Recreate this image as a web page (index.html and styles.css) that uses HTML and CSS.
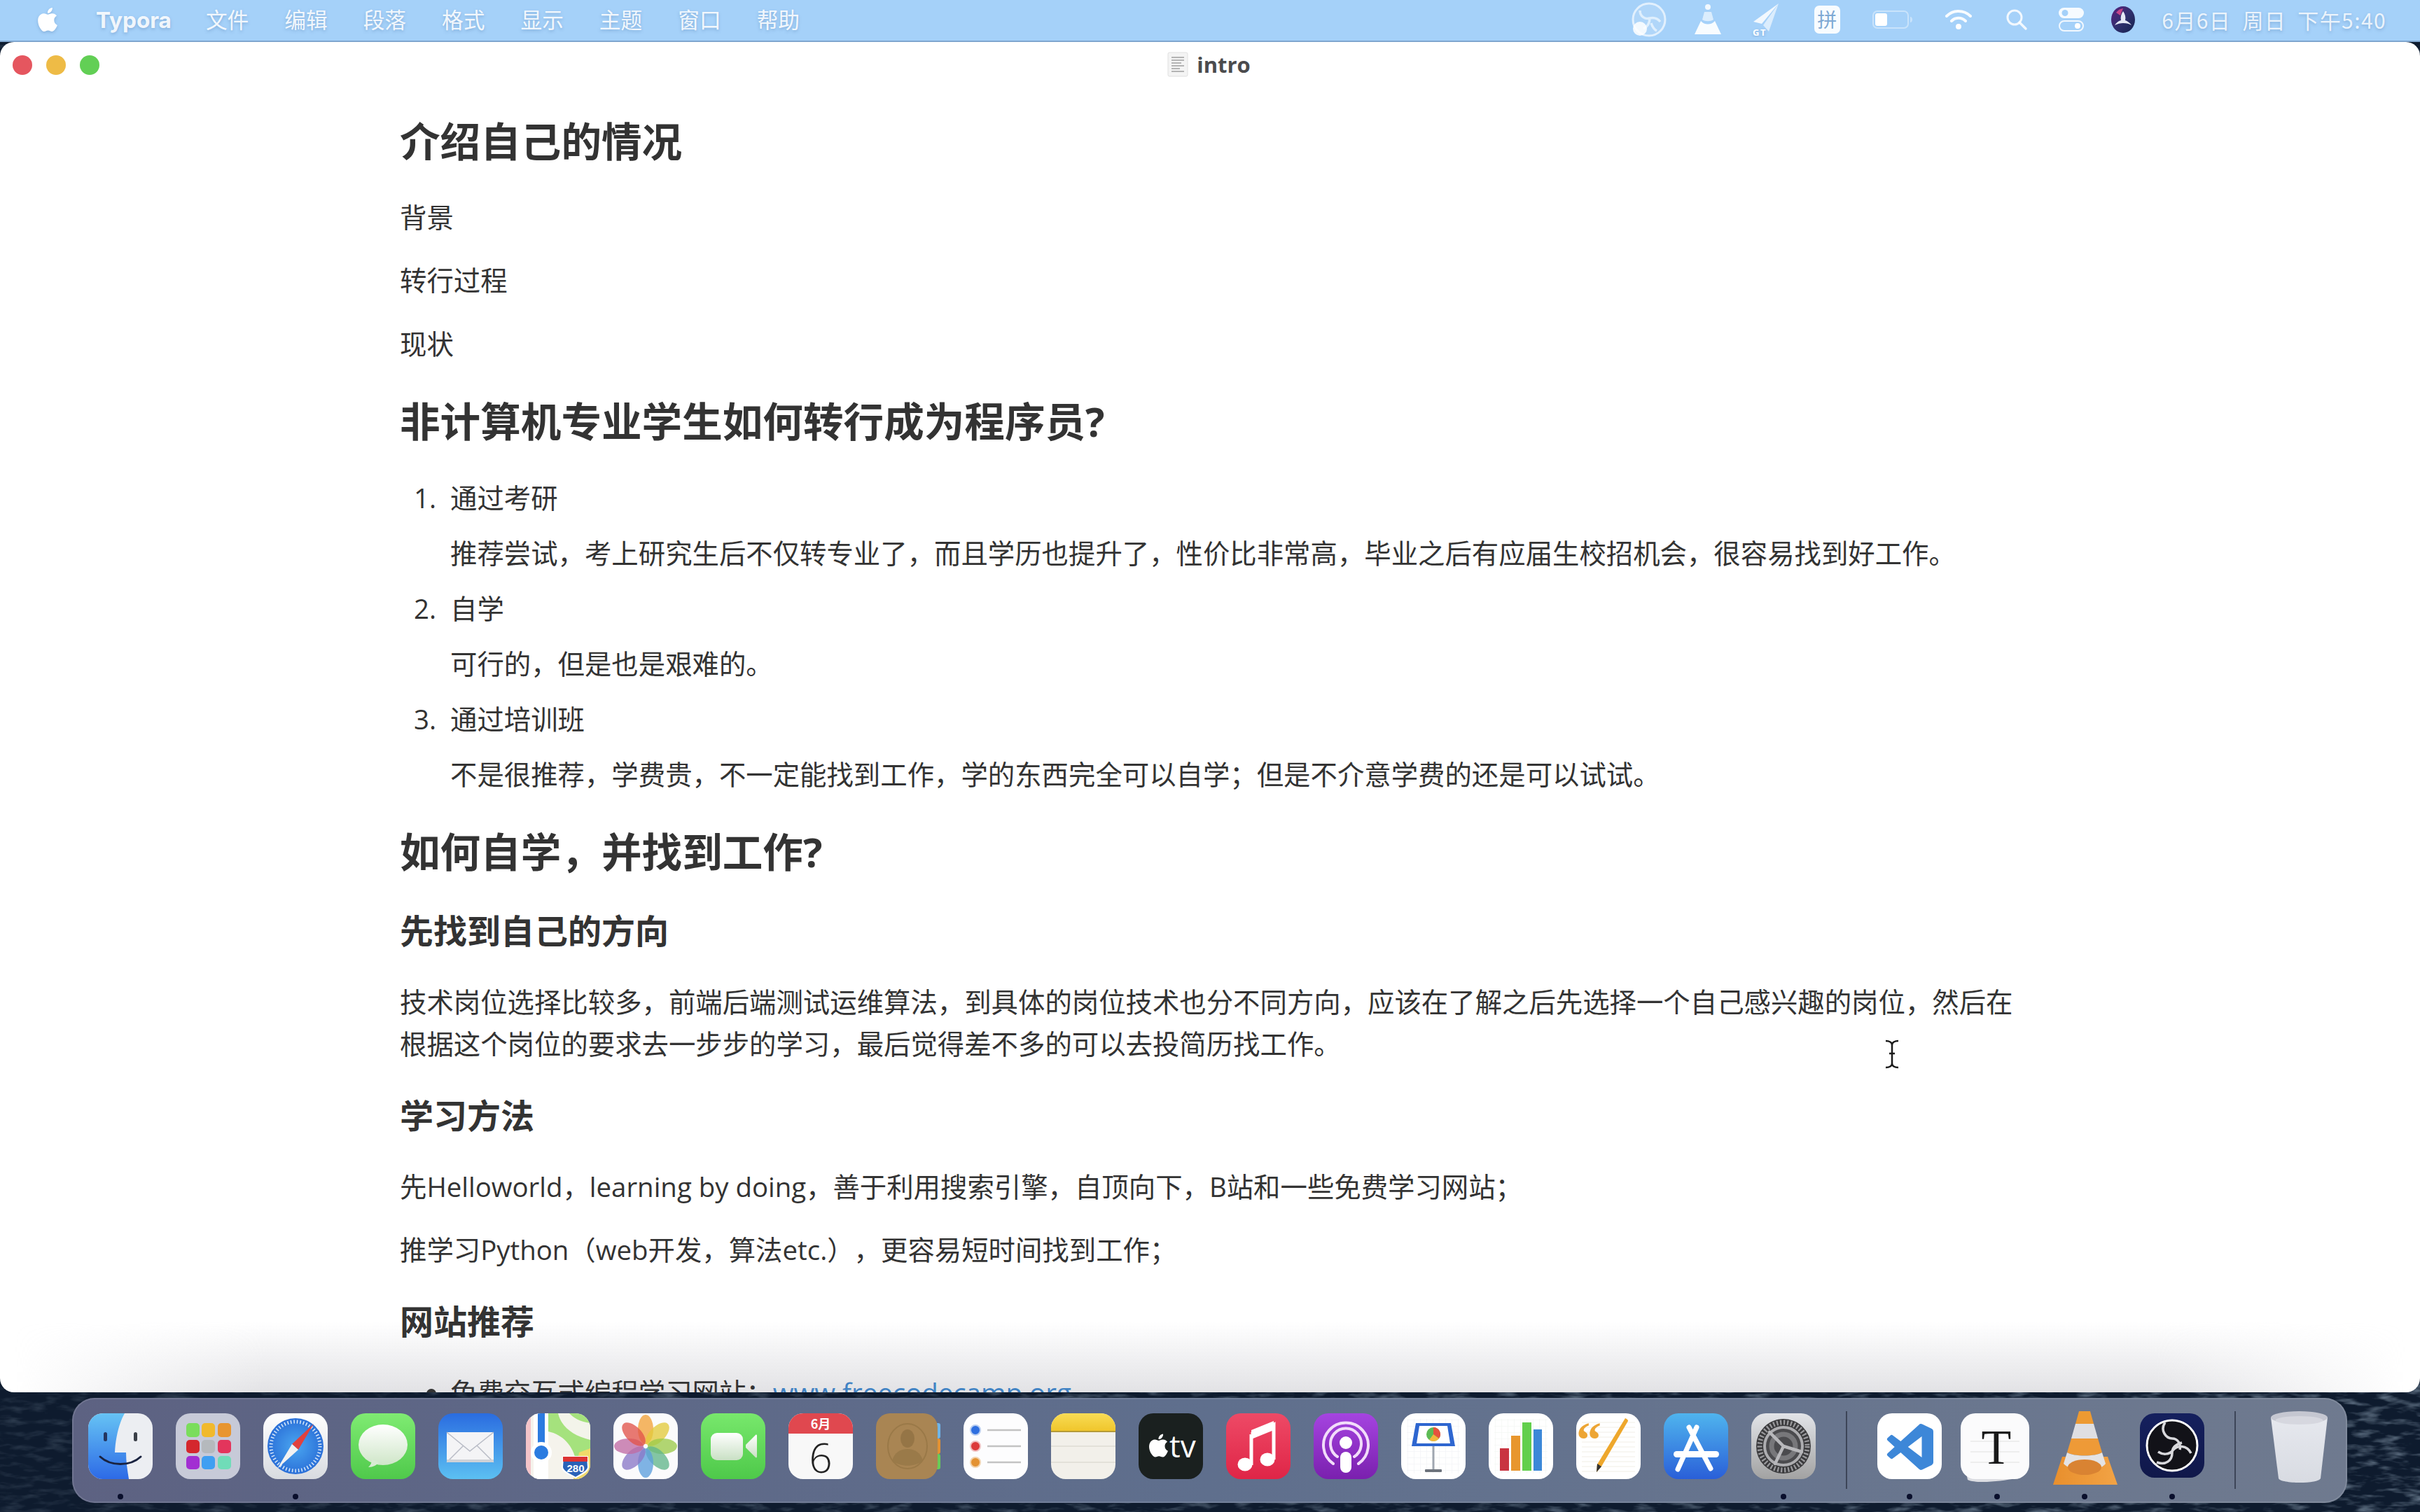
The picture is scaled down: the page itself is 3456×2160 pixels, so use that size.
FILE: index.html
```html
<!DOCTYPE html>
<html lang="zh-CN">
<head>
<meta charset="utf-8">
<title>intro - Typora</title>
<link rel="stylesheet" href="styles.css">
</head>
<body>
<svg class="wallpaper" width="3456" height="2160" aria-hidden="true">
  <defs>
    <filter id="wp" x="0" y="0" width="100%" height="100%">
      <feTurbulence type="fractalNoise" baseFrequency="0.03 0.11" numOctaves="3" seed="7"/>
      <feColorMatrix values="0 0 0 0 0.42  0 0 0 0 0.54  0 0 0 0 0.66  1.3 0 0 0 -0.62"/>
    </filter>
    <linearGradient id="wpfade" x1="0" y1="0" x2="1" y2="0">
      <stop offset="0" stop-color="#fff" stop-opacity=".35"/>
      <stop offset=".45" stop-color="#fff" stop-opacity=".75"/>
      <stop offset="1" stop-color="#fff" stop-opacity="1"/>
    </linearGradient>
    <mask id="wpmask"><rect width="3456" height="2160" fill="url(#wpfade)"/></mask>
  </defs>
  <rect width="3456" height="2160" fill="#0e1b2e"/>
  <g mask="url(#wpmask)"><rect width="3456" height="2160" filter="url(#wp)"/></g>
</svg>

<header class="menubar">
  <svg class="apple" viewBox="0 0 24 24"><path d="M12.152 6.896c-.948 0-2.415-1.078-3.96-1.04-2.04.027-3.91 1.183-4.961 3.014-2.117 3.675-.546 9.103 1.519 12.09 1.013 1.454 2.208 3.09 3.792 3.039 1.52-.065 2.09-.987 3.935-.987 1.831 0 2.35.987 3.96.948 1.637-.026 2.676-1.48 3.676-2.948 1.156-1.688 1.636-3.325 1.662-3.415-.039-.013-3.182-1.221-3.22-4.857-.026-3.04 2.48-4.494 2.597-4.559-1.429-2.09-3.623-2.324-4.39-2.376-2-.156-3.675 1.09-4.61 1.09zM15.53 3.83c.843-1.012 1.4-2.427 1.245-3.83-1.207.052-2.662.805-3.532 1.818-.78.896-1.454 2.338-1.273 3.714 1.338.104 2.715-.688 3.559-1.701"/></svg>
  <nav class="menus">
    <span class="menu-app">Typora</span>
    <span>文件</span><span>编辑</span><span>段落</span><span>格式</span><span>显示</span><span>主题</span><span>窗口</span><span>帮助</span>
  </nav>
  <div class="status">
    <svg width="54" height="50" viewBox="0 0 54 50"><circle cx="27" cy="25" r="23" fill="#fff" fill-opacity=".12" stroke="#fff" stroke-opacity=".65" stroke-width="3"/><circle cx="14" cy="38" r="10" fill="#fff" fill-opacity=".85"/><path d="M14 12c0 9 8 13 14 11 5-1 11 0 15 5M28 23c0 7-3 12-9 15M30 30c2 6 4 9 8 11" fill="none" stroke="#fff" stroke-opacity=".6" stroke-width="3.500"/></svg>
    <svg width="40" height="46" viewBox="0 0 40 46"><circle cx="20" cy="5" r="4" fill="#fff" fill-opacity=".85"/><path d="M15 12h10l3 11c-4 3-12 3-16 0z" fill="#fff" fill-opacity=".6"/><path d="M10 25c5 6 15 6 20 0l9 19H1z" fill="#fff" fill-opacity=".92"/></svg>
    <svg width="44" height="50" viewBox="0 0 44 50"><path d="M40 2L4 28l12 3z" fill="#fff" fill-opacity=".85"/><path d="M40 2L18 33l8 9z" fill="#fff" fill-opacity=".6"/><text x="3" y="48" class="st-tiny">G</text><text x="14" y="48" class="st-tiny">T</text></svg>
    <span class="pin">拼</span>
    <svg width="58" height="28" viewBox="0 0 58 28"><rect x="1" y="2" width="50" height="24" rx="6" fill="none" stroke="#fff" stroke-opacity=".4" stroke-width="2"/><rect x="4" y="5" width="17" height="18" rx="3" fill="#fff"/><path d="M54 10c2 0 3 2 3 4s-1 4-3 4z" fill="#fff" fill-opacity=".4"/></svg>
    <svg width="40" height="34" viewBox="0 0 40 34"><path d="M3 12a24 24 0 0 1 34 0M10 19a14 14 0 0 1 20 0" fill="none" stroke="#fff" stroke-opacity=".92" stroke-width="4" stroke-linecap="round"/><circle cx="20" cy="27" r="4" fill="#fff"/></svg>
    <svg width="32" height="32" viewBox="0 0 32 32"><circle cx="13" cy="13" r="10" fill="none" stroke="#fff" stroke-opacity=".85" stroke-width="3"/><path d="M20 20l9 9" stroke="#fff" stroke-opacity=".85" stroke-width="3.500" stroke-linecap="round"/></svg>
    <svg width="38" height="36" viewBox="0 0 38 36"><rect x="1" y="1" width="36" height="15" rx="7.500" fill="#fff" fill-opacity=".9"/><circle cx="10" cy="8.500" r="4.500" fill="#a5d1f9"/><rect x="2" y="20" width="34" height="14" rx="7" fill="none" stroke="#fff" stroke-opacity=".85" stroke-width="2"/><circle cx="28" cy="27" r="4" fill="#fff"/></svg>
    <svg width="36" height="40" viewBox="0 0 36 40"><defs><linearGradient id="siri" x1="0" y1="0" x2="1" y2="1"><stop offset="0" stop-color="#5a1f7e"/><stop offset=".5" stop-color="#31306e"/><stop offset="1" stop-color="#14224e"/></linearGradient></defs><ellipse cx="18" cy="20" rx="17" ry="19" fill="url(#siri)"/><path d="M18 8c-3 4-4 9-3 13-4 1-7 4-9 7 4-2 8-3 12-3 5 0 9 1 12 3-2-3-6-6-9-7 1-4 0-9-3-13z" fill="#e6e8f4"/><path d="M8 10a15 17 0 0 1 10-6l-4 10z" fill="#c3448a"/></svg>
    <time class="clock">6月6日 周日 下午5:40</time>
  </div>
</header>

<main class="window">
  <div class="titlebar">
    <div class="lights"><i class="light red"></i><i class="light amber"></i><i class="light green"></i></div>
    <div class="title">
      <svg width="32" height="36" viewBox="0 0 32 36"><rect x="2" y="1" width="28" height="34" rx="2" fill="#f4f4f4" stroke="#e0e0e0"/><path d="M7 8h18M7 12h18M7 16h14M7 20h18M7 24h12M7 28h18" stroke="#b4b4b4" stroke-width="2"/></svg>
      <span>intro</span>
    </div>
  </div>
  <div class="dock-shade"></div>
  <article class="doc">
    <h2>介绍自己的情况</h2>
    <p>背景</p>
    <p>转行过程</p>
    <p>现状</p>
    <h2>非计算机专业学生如何转行成为程序员?</h2>
    <ol>
      <li><p>通过考研</p><p>推荐尝试，考上研究生后不仅转专业了，而且学历也提升了，性价比非常高，毕业之后有应届生校招机会，很容易找到好工作。</p></li>
      <li><p>自学</p><p>可行的，但是也是艰难的。</p></li>
      <li><p>通过培训班</p><p>不是很推荐，学费贵，不一定能找到工作，学的东西完全可以自学；但是不介意学费的还是可以试试。</p></li>
    </ol>
    <h2>如何自学，并找到工作?</h2>
    <h3>先找到自己的方向</h3>
    <p>技术岗位选择比较多，前端后端测试运维算法，到具体的岗位技术也分不同方向，应该在了解之后先选择一个自己感兴趣的岗位，然后在根据这个岗位的要求去一步步的学习，最后觉得差不多的可以去投简历找工作。</p>
    <h3>学习方法</h3>
    <p>先Helloworld，learning by doing，善于利用搜索引擎，自顶向下，B站和一些免费学习网站；</p>
    <p>推学习Python（web开发，算法etc.），更容易短时间找到工作；</p>
    <h3>网站推荐</h3>
    <ul>
      <li>免费交互式编程学习网站：<a href="#">www.freecodecamp.org</a></li>
    </ul>
  </article>
  <svg class="ibeam" width="24" height="44" viewBox="0 0 24 44"><path d="M3 3c5 0 9 2 9 6v26c0 4-4 6-9 6M21 3c-5 0-9 2-9 6v26c0 4 4 6 9 6M8 21h8" fill="none" stroke="#1a1a1a" stroke-width="2.500"/></svg>
</main>

<footer class="dock">
  <div class="app running"><svg viewBox="0 0 92 94"><defs><linearGradient id="fd" x1="0" y1="0" x2="0" y2="1"><stop offset="0" stop-color="#66c3f4"/><stop offset="1" stop-color="#2d6ae6"/></linearGradient><clipPath id="fc"><rect width="92" height="94" rx="21"/></clipPath></defs><g clip-path="url(#fc)"><rect width="92" height="94" fill="#eceef2"/><path d="M0 0h52c-8 14-13 35-14 56h16c0 13 2 26 4 38H0z" fill="url(#fd)"/></g><rect x="22" y="27" width="5" height="13" rx="2.500" fill="#243560"/><rect x="65" y="27" width="5" height="13" rx="2.500" fill="#3a3f48"/><path d="M17 62c15 14 43 14 58 0" fill="none" stroke="#1a2340" stroke-width="3" stroke-linecap="round"/></svg></div>

  <div class="app"><svg viewBox="0 0 92 94"><rect width="92" height="94" rx="21" fill="#c7cad8"/><rect x="15" y="14" width="19" height="20" rx="5" fill="#7add5c"/><rect x="37" y="14" width="19" height="20" rx="5" fill="#f1b92d"/><rect x="60" y="14" width="19" height="20" rx="5" fill="#e8952f"/><rect x="15" y="38" width="19" height="19" rx="5" fill="#d4272d"/><rect x="37" y="38" width="19" height="19" rx="5" fill="#b5b9bd"/><rect x="60" y="38" width="19" height="19" rx="5" fill="#e3355c"/><rect x="15" y="61" width="19" height="19" rx="5" fill="#a22fd2"/><rect x="37" y="61" width="19" height="19" rx="5" fill="#3f9ff2"/><rect x="60" y="61" width="19" height="19" rx="5" fill="#70dcb8"/></svg></div>

  <div class="app running"><svg viewBox="0 0 92 94"><defs><linearGradient id="sf" x1="0" y1="0" x2="0" y2="1"><stop offset="0" stop-color="#fff"/><stop offset="1" stop-color="#d8dbe0"/></linearGradient><radialGradient id="sb"><stop offset="0" stop-color="#4aa6f0"/><stop offset="1" stop-color="#2b70d8"/></radialGradient></defs><rect width="92" height="94" rx="21" fill="url(#sf)"/><circle cx="46" cy="47" r="40" fill="url(#sb)"/><circle cx="46" cy="47" r="35" fill="none" stroke="#dbeafa" stroke-width="5" stroke-dasharray="1.500 3"/><path d="M72 15L41 44l9 8z" fill="#e1413e"/><path d="M20 79l21-35 9 8z" fill="#f2f2f2"/></svg></div>

  <div class="app"><svg viewBox="0 0 92 94"><defs><linearGradient id="mg" x1="0" y1="0" x2="0" y2="1"><stop offset="0" stop-color="#7feb72"/><stop offset="1" stop-color="#4fc94b"/></linearGradient><linearGradient id="mb" x1="0" y1="0" x2="0" y2="1"><stop offset="0" stop-color="#fff"/><stop offset="1" stop-color="#cfe6c8"/></linearGradient></defs><rect width="92" height="94" rx="21" fill="url(#mg)"/><ellipse cx="46" cy="45" rx="35" ry="29" fill="url(#mb)"/><path d="M30 66c0 6-3 9-5 11 7 0 12-3 15-7z" fill="#d8ebd2"/></svg></div>

  <div class="app"><svg viewBox="0 0 92 94"><defs><linearGradient id="ml" x1="0" y1="0" x2="0" y2="1"><stop offset="0" stop-color="#2a6ce0"/><stop offset="1" stop-color="#5cc0f2"/></linearGradient></defs><rect width="92" height="94" rx="21" fill="url(#ml)"/><rect x="12" y="27" width="67" height="43" rx="2" fill="#f4f4f6"/><path d="M12 27l33 27 34-27M12 70l24-24M79 70L55 46" fill="none" stroke="#b9bcc6" stroke-width="1.500"/><rect x="12" y="66" width="67" height="4" fill="#cfd1d6"/></svg></div>

  <div class="app"><svg viewBox="0 0 92 94"><defs><clipPath id="mc"><rect width="92" height="94" rx="21"/></clipPath></defs><g clip-path="url(#mc)"><rect width="92" height="94" fill="#f5f3ec"/><path d="M32 0h60v70H72C68 46 52 30 32 26z" fill="#a5e27d"/><path d="M46 0c4 18 20 32 46 38V14C76 12 68 6 62 0z" fill="#f3f4ea"/><path d="M76 56l16-6v44H68z" fill="#f0d96a"/><path d="M0 0h7v94H0z" fill="#f4c3c8"/><path d="M11 0h21v94H11z" fill="#fff"/><path d="M17 0h10v60H17z" fill="#2b7be0"/><circle cx="22" cy="56" r="15" fill="#fff"/><circle cx="22" cy="56" r="10" fill="#2b7be0"/><path d="M53 62h35l1 15c0 7-13 11-18 15-6-4-19-8-19-15z" fill="#2a62b8" stroke="#fff" stroke-width="2"/><rect x="53" y="62" width="35" height="7" fill="#d33"/><text x="71" y="84" class="shield">280</text></g></svg></div>

  <div class="app"><svg viewBox="0 0 92 94"><rect width="92" height="94" rx="21" fill="#fbfbfc"/><g transform="translate(46 47)" fill-opacity=".78"><ellipse cy="-24" rx="11" ry="21" fill="#f2a33a"/><ellipse cy="-24" rx="11" ry="21" fill="#e3cb3c" transform="rotate(45)"/><ellipse cy="-24" rx="11" ry="21" fill="#9ccb4a" transform="rotate(90)"/><ellipse cy="-24" rx="11" ry="21" fill="#62b68a" transform="rotate(135)"/><ellipse cy="-24" rx="11" ry="21" fill="#5c9fdc" transform="rotate(180)"/><ellipse cy="-24" rx="11" ry="21" fill="#8a79c6" transform="rotate(225)"/><ellipse cy="-24" rx="11" ry="21" fill="#c06ca4" transform="rotate(270)"/><ellipse cy="-24" rx="11" ry="21" fill="#e2554a" transform="rotate(315)"/></g></svg></div>

  <div class="app"><svg viewBox="0 0 92 94"><defs><linearGradient id="ft" x1="0" y1="0" x2="0" y2="1"><stop offset="0" stop-color="#78e86c"/><stop offset="1" stop-color="#4ec94a"/></linearGradient><linearGradient id="ftw" x1="0" y1="0" x2="0" y2="1"><stop offset="0" stop-color="#fff"/><stop offset="1" stop-color="#c9e0c4"/></linearGradient></defs><rect width="92" height="94" rx="21" fill="url(#ft)"/><rect x="14" y="28" width="46" height="39" rx="9" fill="url(#ftw)"/><path d="M64 45l14-14c1-1 2 0 2 1v30c0 1-1 2-2 1L64 49z" fill="url(#ftw)"/></svg></div>

  <div class="app"><svg viewBox="0 0 92 94"><defs><clipPath id="cc"><rect width="92" height="94" rx="21"/></clipPath></defs><g clip-path="url(#cc)"><rect width="92" height="94" fill="#f8f8f8"/><rect width="92" height="29" fill="#e0484f"/></g><text x="46" y="22" class="cal-m">6月</text><text x="46" y="85" class="cal-d">6</text></svg></div>

  <div class="app"><svg viewBox="0 0 92 94"><rect x="84" y="14" width="8" height="22" rx="3" fill="#6fb5e8"/><rect x="84" y="36" width="8" height="22" rx="3" fill="#e39233"/><rect x="84" y="58" width="8" height="22" rx="3" fill="#68cc58"/><rect width="88" height="94" rx="20" fill="#a98553"/><ellipse cx="45" cy="47" rx="28" ry="32" fill="none" stroke="#9a7948" stroke-width="2"/><ellipse cx="45" cy="36" rx="10" ry="13" fill="#957546"/><path d="M23 68c3-12 12-17 22-17s19 5 22 17c-12 9-32 9-44 0z" fill="#9a7a49"/></svg></div>

  <div class="app"><svg viewBox="0 0 92 94"><rect width="92" height="94" rx="21" fill="#fdfdfe"/><circle cx="17" cy="24" r="7" fill="#2f6fe0" stroke="#b8cdf0" stroke-width="2"/><circle cx="17" cy="47" r="7" fill="#dc3a3a" stroke="#f0c0c0" stroke-width="2"/><circle cx="17" cy="70" r="7" fill="#e39233" stroke="#f2d3ad" stroke-width="2"/><path d="M34 24h48M34 47h48M34 70h48" stroke="#c3c3c3" stroke-width="2.500"/></svg></div>

  <div class="app"><svg viewBox="0 0 92 94"><defs><clipPath id="nc"><rect width="92" height="94" rx="21"/></clipPath><linearGradient id="ny" x1="0" y1="0" x2="0" y2="1"><stop offset="0" stop-color="#f8dc55"/><stop offset="1" stop-color="#f0c62c"/></linearGradient></defs><g clip-path="url(#nc)"><rect width="92" height="94" fill="#f2f0ea"/><rect width="92" height="25" fill="url(#ny)"/><rect y="25" width="92" height="2" fill="#b49a38"/><path d="M0 47h92M0 70h92" stroke="#dedbd3" stroke-width="1.500"/></g></svg></div>

  <div class="app"><svg viewBox="0 0 92 94"><rect width="92" height="94" rx="21" fill="#1a201f"/><svg x="12" y="28" width="33" height="36" viewBox="0 0 24 24"><path fill="#fff" d="M12.152 6.896c-.948 0-2.415-1.078-3.96-1.04-2.04.027-3.91 1.183-4.961 3.014-2.117 3.675-.546 9.103 1.519 12.09 1.013 1.454 2.208 3.09 3.792 3.039 1.52-.065 2.09-.987 3.935-.987 1.831 0 2.35.987 3.96.948 1.637-.026 2.676-1.48 3.676-2.948 1.156-1.688 1.636-3.325 1.662-3.415-.039-.013-3.182-1.221-3.22-4.857-.026-3.04 2.48-4.494 2.597-4.559-1.429-2.09-3.623-2.324-4.39-2.376-2-.156-3.675 1.09-4.61 1.09zM15.53 3.83c.843-1.012 1.4-2.427 1.245-3.83-1.207.052-2.662.805-3.532 1.818-.78.896-1.454 2.338-1.273 3.714 1.338.104 2.715-.688 3.559-1.701"/></svg><text x="44" y="63" class="tv">tv</text></svg></div>

  <div class="app"><svg viewBox="0 0 92 94"><defs><linearGradient id="mu" x1="0" y1="0" x2="0" y2="1"><stop offset="0" stop-color="#ee4a66"/><stop offset="1" stop-color="#df2547"/></linearGradient></defs><rect width="92" height="94" rx="21" fill="url(#mu)"/><path d="M36 30l32-14v50" fill="none" stroke="#fff" stroke-width="5"/><path d="M36 30v44" stroke="#fff" stroke-width="5"/><path d="M36 24l32-13v13L36 37z" fill="#fff"/><ellipse cx="27" cy="73" rx="10.500" ry="9.500" fill="#fff"/><ellipse cx="59" cy="66" rx="10.500" ry="9.500" fill="#fff"/></svg></div>

  <div class="app"><svg viewBox="0 0 92 94"><defs><linearGradient id="pd" x1="0" y1="0" x2="0" y2="1"><stop offset="0" stop-color="#a544e0"/><stop offset="1" stop-color="#7a20ae"/></linearGradient></defs><rect width="92" height="94" rx="21" fill="url(#pd)"/><path d="M28 72a32 32 0 1 1 36 0M34 62a22 22 0 1 1 24 0" fill="none" stroke="#f2dcfa" stroke-width="4" stroke-linecap="round"/><circle cx="46" cy="42" r="9" fill="#fff"/><rect x="38" y="55" width="16" height="30" rx="8" fill="#fff"/></svg></div>

  <div class="app"><svg viewBox="0 0 92 94"><defs><pattern id="kg" width="9" height="9" patternUnits="userSpaceOnUse"><path d="M9 0H0V9" fill="none" stroke="#eef0f4"/></pattern></defs><rect width="92" height="94" rx="21" fill="#fff"/><rect x="8" y="8" width="76" height="78" fill="url(#kg)"/><path d="M21 14h50l6 33H15z" fill="#2e66d0"/><path d="M26 18h40l4 25H22z" fill="#fff"/><circle cx="46" cy="30" r="10" fill="#5dbb55"/><path d="M46 30V20a10 10 0 0 1 8 16z" fill="#e6523e"/><path d="M46 30l8 6a10 10 0 0 1-14 2z" fill="#f2b73c"/><path d="M46 47v34" stroke="#9fa6b0" stroke-width="3"/><rect x="34" y="80" width="24" height="4" rx="1" fill="#6d737c"/></svg></div>

  <div class="app"><svg viewBox="0 0 92 94"><defs><pattern id="ng" width="9" height="9" patternUnits="userSpaceOnUse"><path d="M9 0H0V9" fill="none" stroke="#f0f3f0"/></pattern></defs><rect width="92" height="94" rx="21" fill="#fff"/><rect x="8" y="8" width="76" height="78" fill="url(#ng)"/><rect x="16" y="50" width="13" height="32" fill="#c93441"/><rect x="32" y="32" width="13" height="50" fill="#e8962d"/><rect x="48" y="13" width="13" height="69" fill="#62cf4c"/><rect x="64" y="23" width="12" height="59" fill="#3c88d8"/></svg></div>

  <div class="app"><svg viewBox="0 0 92 94"><defs><pattern id="pl" width="92" height="7" patternUnits="userSpaceOnUse"><path d="M0 6h92" stroke="#f1eee6"/></pattern></defs><rect width="92" height="94" rx="21" fill="#fff"/><rect x="8" y="8" width="76" height="80" fill="url(#pl)"/><text x="0" y="62" class="pq">“</text><path d="M70 7c3 1 4 3 4 4L36 76l-7 8 1-11z" fill="#eea72c"/><path d="M30 72l6 4-7 8z" fill="#333"/></svg></div>

  <div class="app"><svg viewBox="0 0 92 94"><defs><linearGradient id="as" x1="0" y1="0" x2="0" y2="1"><stop offset="0" stop-color="#4fb4ee"/><stop offset="1" stop-color="#2a5fd8"/></linearGradient></defs><rect width="92" height="94" rx="21" fill="url(#as)"/><path d="M36 20L67 79M47 20L20 80" fill="none" stroke="#fff" stroke-width="7" stroke-linecap="round"/><rect x="14" y="54" width="65" height="9" rx="4.500" fill="#fff"/></svg></div>

  <div class="app running"><svg viewBox="0 0 92 94"><defs><linearGradient id="sp" x1="0" y1="0" x2="0" y2="1"><stop offset="0" stop-color="#e2e4e8"/><stop offset="1" stop-color="#a2a2a2"/></linearGradient></defs><rect width="92" height="94" rx="21" fill="url(#sp)"/><circle cx="46" cy="47" r="39" fill="#3a3a3c"/><circle cx="46" cy="47" r="34" fill="none" stroke="#9a9a9d" stroke-width="7" stroke-dasharray="2.200 2.800"/><circle cx="46" cy="47" r="27" fill="#4b4b4e" stroke="#adadb0" stroke-width="4"/><circle cx="46" cy="47" r="17" fill="none" stroke="#77777a" stroke-width="7"/><path d="M46 47L26 27M46 47L72 55M46 47L34 72" stroke="#b8b8bb" stroke-width="4.500" stroke-linecap="round"/></svg></div>

  <div class="divider"></div>

  <div class="app running"><svg viewBox="0 0 92 94"><rect width="92" height="94" rx="21" fill="#fff"/><svg x="13" y="15" width="68" height="66" viewBox="0 0 24 24"><path fill="#3d87d8" d="M23.15 2.587L18.21.21a1.494 1.494 0 0 0-1.705.29l-9.46 8.63-4.12-3.128a.999.999 0 0 0-1.276.057L.327 7.261A1 1 0 0 0 .326 8.74L3.899 12 .326 15.26a1 1 0 0 0 .001 1.479L1.65 17.94a.999.999 0 0 0 1.276.057l4.12-3.128 9.46 8.63a1.492 1.492 0 0 0 1.704.29l4.942-2.377A1.5 1.5 0 0 0 24 20.06V3.939a1.5 1.5 0 0 0-.85-1.352zm-5.146 14.861L10.826 12l7.178-5.448v10.896z"/></svg></svg></div>

  <div class="app running"><svg viewBox="0 0 92 94"><path d="M-5 50L4 95c12 6 50 2 68-2z" fill="#dcdde2"/><rect x="-6" width="98" height="94" rx="21" fill="#fbfbfc"/><path d="M8 40h70M8 55h70M8 70h70" stroke="#eeeeee" stroke-width="2"/><text x="45" y="72" class="ty">T</text></svg></div>

  <div class="app running"><svg viewBox="0 0 92 94"><defs><linearGradient id="vo" x1="0" y1="0" x2="1" y2="0"><stop offset="0" stop-color="#e88f2d"/><stop offset="1" stop-color="#f2a345"/></linearGradient></defs><path d="M14 62L1 102h92L79 62z" fill="url(#vo)"/><path d="M38-3h16l5 18H33z" fill="#ed9a32"/><path d="M33 15h26l6 21H27z" fill="#dfdfe2"/><path d="M27 36h38l6 20c-10 6-40 6-50 0z" fill="#ee9a37"/><path d="M21 56c10 6 40 6 50 0l5 16c-8 12-50 12-60 0z" fill="#e4e3e4"/><ellipse cx="46" cy="77" rx="24" ry="11" fill="#d98332"/></svg></div>

  <div class="app running"><svg viewBox="0 0 92 94"><defs><linearGradient id="ob" x1="0" y1="0" x2="0" y2="1"><stop offset="0" stop-color="#15205e"/><stop offset="1" stop-color="#10184a"/></linearGradient></defs><rect width="92" height="92" rx="21" fill="url(#ob)"/><circle cx="46" cy="46" r="36" fill="#121218" stroke="#fff" stroke-width="3"/><path d="M36 13c-8 12 2 23 10 23 8 0 13 8 11 16M73 57c-6-12-20-12-26-4-6 7-15 6-21 2M24 70c13 5 22-3 22-13 0-8 6-13 14-15" fill="none" stroke="#d8d8dc" stroke-width="3.500"/></svg></div>

  <div class="divider"></div>

  <div class="app"><svg viewBox="0 0 92 94"><defs><linearGradient id="tr" x1="0" y1="0" x2="0" y2="1"><stop offset="0" stop-color="#e6e8ee"/><stop offset="1" stop-color="#d8dbe2"/></linearGradient></defs><path d="M7 6l11 87c3 8 57 8 60 0L88 6z" fill="url(#tr)"/><ellipse cx="47.500" cy="6" rx="40.500" ry="9" fill="#c5c7d1"/><ellipse cx="47.500" cy="10" rx="34" ry="6" fill="#d6d7df"/></svg></div>
</footer>
</body>
</html>
```
FILE: styles.css
```css
* { box-sizing: border-box; }
html, body { margin: 0; padding: 0; }
body {
  position: relative;
  display: flex;
  flex-direction: column;
  width: 3456px;
  height: 2160px;
  overflow: hidden;
  background: #0e1b2e;
  font-family: "Open Sans", "Noto Sans CJK SC", sans-serif;
  text-spacing-trim: space-all;
}
.wallpaper { position: absolute; inset: 0; }

/* menu bar */
.menubar {
  position: relative;
  flex: none;
  display: flex;
  align-items: center;
  height: 60px;
  padding: 0 48px 2px 51px;
  background: #a5d1f9;
  border-bottom: 2px solid #7fa6cf;
  color: rgba(255, 255, 255, .9);
  font-size: 30.7px;
  line-height: 44px;
  font-family: "Noto Sans CJK SC", sans-serif;
  text-shadow: 0 2px 4px rgba(70, 110, 160, .35);
}
.apple { width: 34px; height: 42px; fill: #fff; margin-right: 52px; filter: drop-shadow(0 2px 2px rgba(70,110,160,.3)); }
.menus { display: flex; align-items: baseline; gap: 51px; }
.menu-app { font-family: "Inter", sans-serif; font-weight: 700; font-size: 31.500px; margin-right: -2px; }
.status {
  margin-left: auto;
  display: grid;
  grid-template-columns: 84px 84px 82px 92px 96px 92px 74px 82px 66px auto;
  align-items: center;
  justify-items: center;
}
.status svg { display: block; }
.pin {
  display: block;
  width: 37px;
  height: 40px;
  border-radius: 7px;
  background: rgba(255, 255, 255, .92);
  color: #7fa9d4;
  font-size: 28px;
  line-height: 38px;
  text-align: center;
  text-shadow: none;
}
.st-tiny { font: 700 13px "Open Sans", sans-serif; fill: #fff; }
.clock { justify-self: start; margin-left: 22px; white-space: nowrap; word-spacing: 8px; letter-spacing: 1.4px; font-size: 30px; color: rgba(255,255,255,.82); }

/* window */
.window {
  position: relative;
  flex: none;
  height: 1929px;
  background: #fff;
  border-radius: 20px;
  overflow: hidden;
  color: #333;
}
.titlebar { position: relative; display: flex; justify-content: center; align-items: center; height: 64px; }
.lights { position: absolute; left: 18px; top: 19px; display: flex; gap: 20px; }
.light { width: 28px; height: 28px; border-radius: 50%; }
.red { background: #e5565f; }
.amber { background: #eebb46; }
.green { background: #62cf55; }
.title { display: flex; align-items: center; gap: 11px; margin-right: 4px; font-size: 31px; font-weight: 700; color: #4b4b4d; }

.doc {
  position: relative;
  width: 2886px;
  padding: 38px 0 0 571px;
  font-size: 38.4px;
  line-height: 60px;
}
.doc > :first-child { margin-top: 0; }
.doc p { margin: 30.400px 0; }
.doc h2 { margin: 41px 0 38px; font-size: 57.6px; line-height: 80px; font-weight: 700; }
.doc h3 { margin: 39px 0 38px; font-size: 48px; line-height: 67px; font-weight: 700; }
.doc ol { margin: 39px 0 37px; padding-left: 72px; }
.doc ul { margin: 37px 0; padding-left: 72px; }
.doc ol p { margin: 19px 0; }
.doc ol li::marker { content: counter(list-item) ". \00a0"; }
.doc a { color: #4183c4; text-decoration: none; }

.dock-shade {
  position: absolute;
  left: 0; right: 0; bottom: 0;
  height: 100px;
  background: linear-gradient(rgba(214, 214, 218, 0), rgba(214, 214, 218, .7));
  -webkit-mask-image: linear-gradient(90deg, transparent 20px, #000 380px, #000 calc(100% - 380px), transparent calc(100% - 20px));
  mask-image: linear-gradient(90deg, transparent 20px, #000 380px, #000 calc(100% - 380px), transparent calc(100% - 20px));
}
.ibeam { position: absolute; left: 2690px; top: 1424px; }

/* dock */
.dock {
  position: relative;
  flex: none;
  display: flex;
  gap: 33px;
  width: 3249px;
  height: 150px;
  margin: 8px 0 0 103px;
  padding: 22px 0 0 23px;
  background: linear-gradient(90deg, #5d6282, #5f6f8d 50%, #6f7a8f);
  border-radius: 32px;
  box-shadow: inset 0 0 0 2px rgba(255, 255, 255, .12);
}
.app { position: relative; flex: none; width: 92px; height: 94px; }
.app svg { display: block; overflow: visible; }
.app.running::after {
  content: "";
  position: absolute;
  left: 42px;
  top: 115px;
  width: 8px;
  height: 8px;
  border-radius: 50%;
  background: #0a0f2c;
}
.divider { flex: none; width: 2px; height: 111px; margin: -3px 10px 0; background: #3d4558; }

.shield { font: 700 15px "Liberation Sans", sans-serif; fill: #fff; text-anchor: middle; }
.cal-m { font: 700 18px "Noto Sans CJK SC", sans-serif; fill: #fff; text-anchor: middle; }
.cal-d { font: 300 58px "Open Sans", sans-serif; fill: #222; text-anchor: middle; }
.tv { font: 500 44px "Open Sans", sans-serif; fill: #fff; }
.pq { font: 700 72px "Liberation Serif", serif; fill: #eda534; }
.ty { font: 400 70px "Liberation Serif", serif; fill: #1a1a1a; text-anchor: middle; }
```
